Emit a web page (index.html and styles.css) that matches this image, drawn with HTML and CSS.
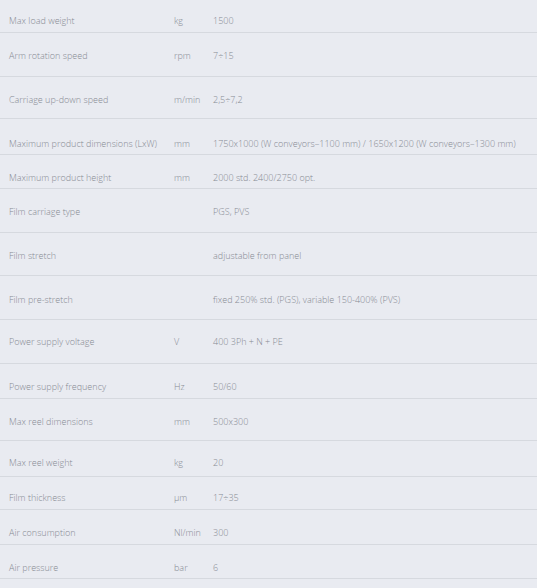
FILE: index.html
```html
<!DOCTYPE html>
<html>
<head>
<meta charset="utf-8">
<link rel="stylesheet" href="styles.css">
</head>
<body>
<div class="specs">
  <div class="row"><div class="lbl">Max load weight</div><div class="unit">kg</div><div class="val">1500</div></div>
  <div class="row"><div class="lbl">Arm rotation speed</div><div class="unit">rpm</div><div class="val">7÷15</div></div>
  <div class="row"><div class="lbl">Carriage up-down speed</div><div class="unit">m/min</div><div class="val">2,5÷7,2</div></div>
  <div class="row"><div class="lbl">Maximum product dimensions (LxW)</div><div class="unit">mm</div><div class="val">1750x1000 (W conveyors–1100 mm) / 1650x1200 (W conveyors–1300 mm)</div></div>
  <div class="row"><div class="lbl">Maximum product height</div><div class="unit">mm</div><div class="val">2000 std. 2400/2750 opt.</div></div>
  <div class="row"><div class="lbl">Film carriage type</div><div class="unit"></div><div class="val">PGS, PVS</div></div>
  <div class="row"><div class="lbl">Film stretch</div><div class="unit"></div><div class="val">adjustable from panel</div></div>
  <div class="row"><div class="lbl">Film pre-stretch</div><div class="unit"></div><div class="val">fixed 250% std. (PGS), variable 150-400% (PVS)</div></div>
  <div class="row"><div class="lbl">Power supply voltage</div><div class="unit">V</div><div class="val">400 3Ph + N + PE</div></div>
  <div class="row"><div class="lbl">Power supply frequency</div><div class="unit">Hz</div><div class="val">50/60</div></div>
  <div class="row"><div class="lbl">Max reel dimensions</div><div class="unit">mm</div><div class="val">500x300</div></div>
  <div class="row"><div class="lbl">Max reel weight</div><div class="unit">kg</div><div class="val">20</div></div>
  <div class="row"><div class="lbl">Film thickness</div><div class="unit">µm</div><div class="val">17÷35</div></div>
  <div class="row"><div class="lbl">Air consumption</div><div class="unit">Nl/min</div><div class="val">300</div></div>
  <div class="row"><div class="lbl">Air pressure</div><div class="unit">bar</div><div class="val">6</div></div>
</div>
</body>
</html>
```
FILE: styles.css
```css
html, body {
  margin: 0;
  padding: 0;
  background: #e9ebf1;
}
body {
  font-family: "Open Sans", "Liberation Sans", sans-serif;
  font-weight: 300;
  font-size: 9px;
  color: #868a92;
}
.specs {
  display: flex;
  flex-direction: column;
}
.row {
  display: grid;
  grid-template-columns: 164px 39px 1fr;
  padding-left: 9px;
  box-sizing: border-box;
  border-bottom: 1px solid #d6d9df;
  padding-top: 17px;
  line-height: 11px;
  white-space: nowrap;
}
.row:nth-child(1) { height: 33px; padding-top: 15px; }
.row:nth-child(2) { height: 44px; }
.row:nth-child(3) { height: 42px; }
.row:nth-child(4) { height: 36px; padding-top: 19px; }
.row:nth-child(5) { height: 34px; }
.row:nth-child(6) { height: 44px; }
.row:nth-child(7) { height: 43px; }
.row:nth-child(8) { height: 44px; padding-top: 18px; }
.row:nth-child(9) { height: 44px; padding-top: 16px; }
.row:nth-child(10) { height: 35px; }
.row:nth-child(11) { height: 42px; }
.row:nth-child(12) { height: 36px; padding-top: 16px; }
.row:nth-child(13) { height: 33px; padding-top: 15px; }
.row:nth-child(14) { height: 35px; }
.row:nth-child(15) { height: 34px; }
.unit { padding-left: 1px; }
.val { padding-left: 1px; }
```
